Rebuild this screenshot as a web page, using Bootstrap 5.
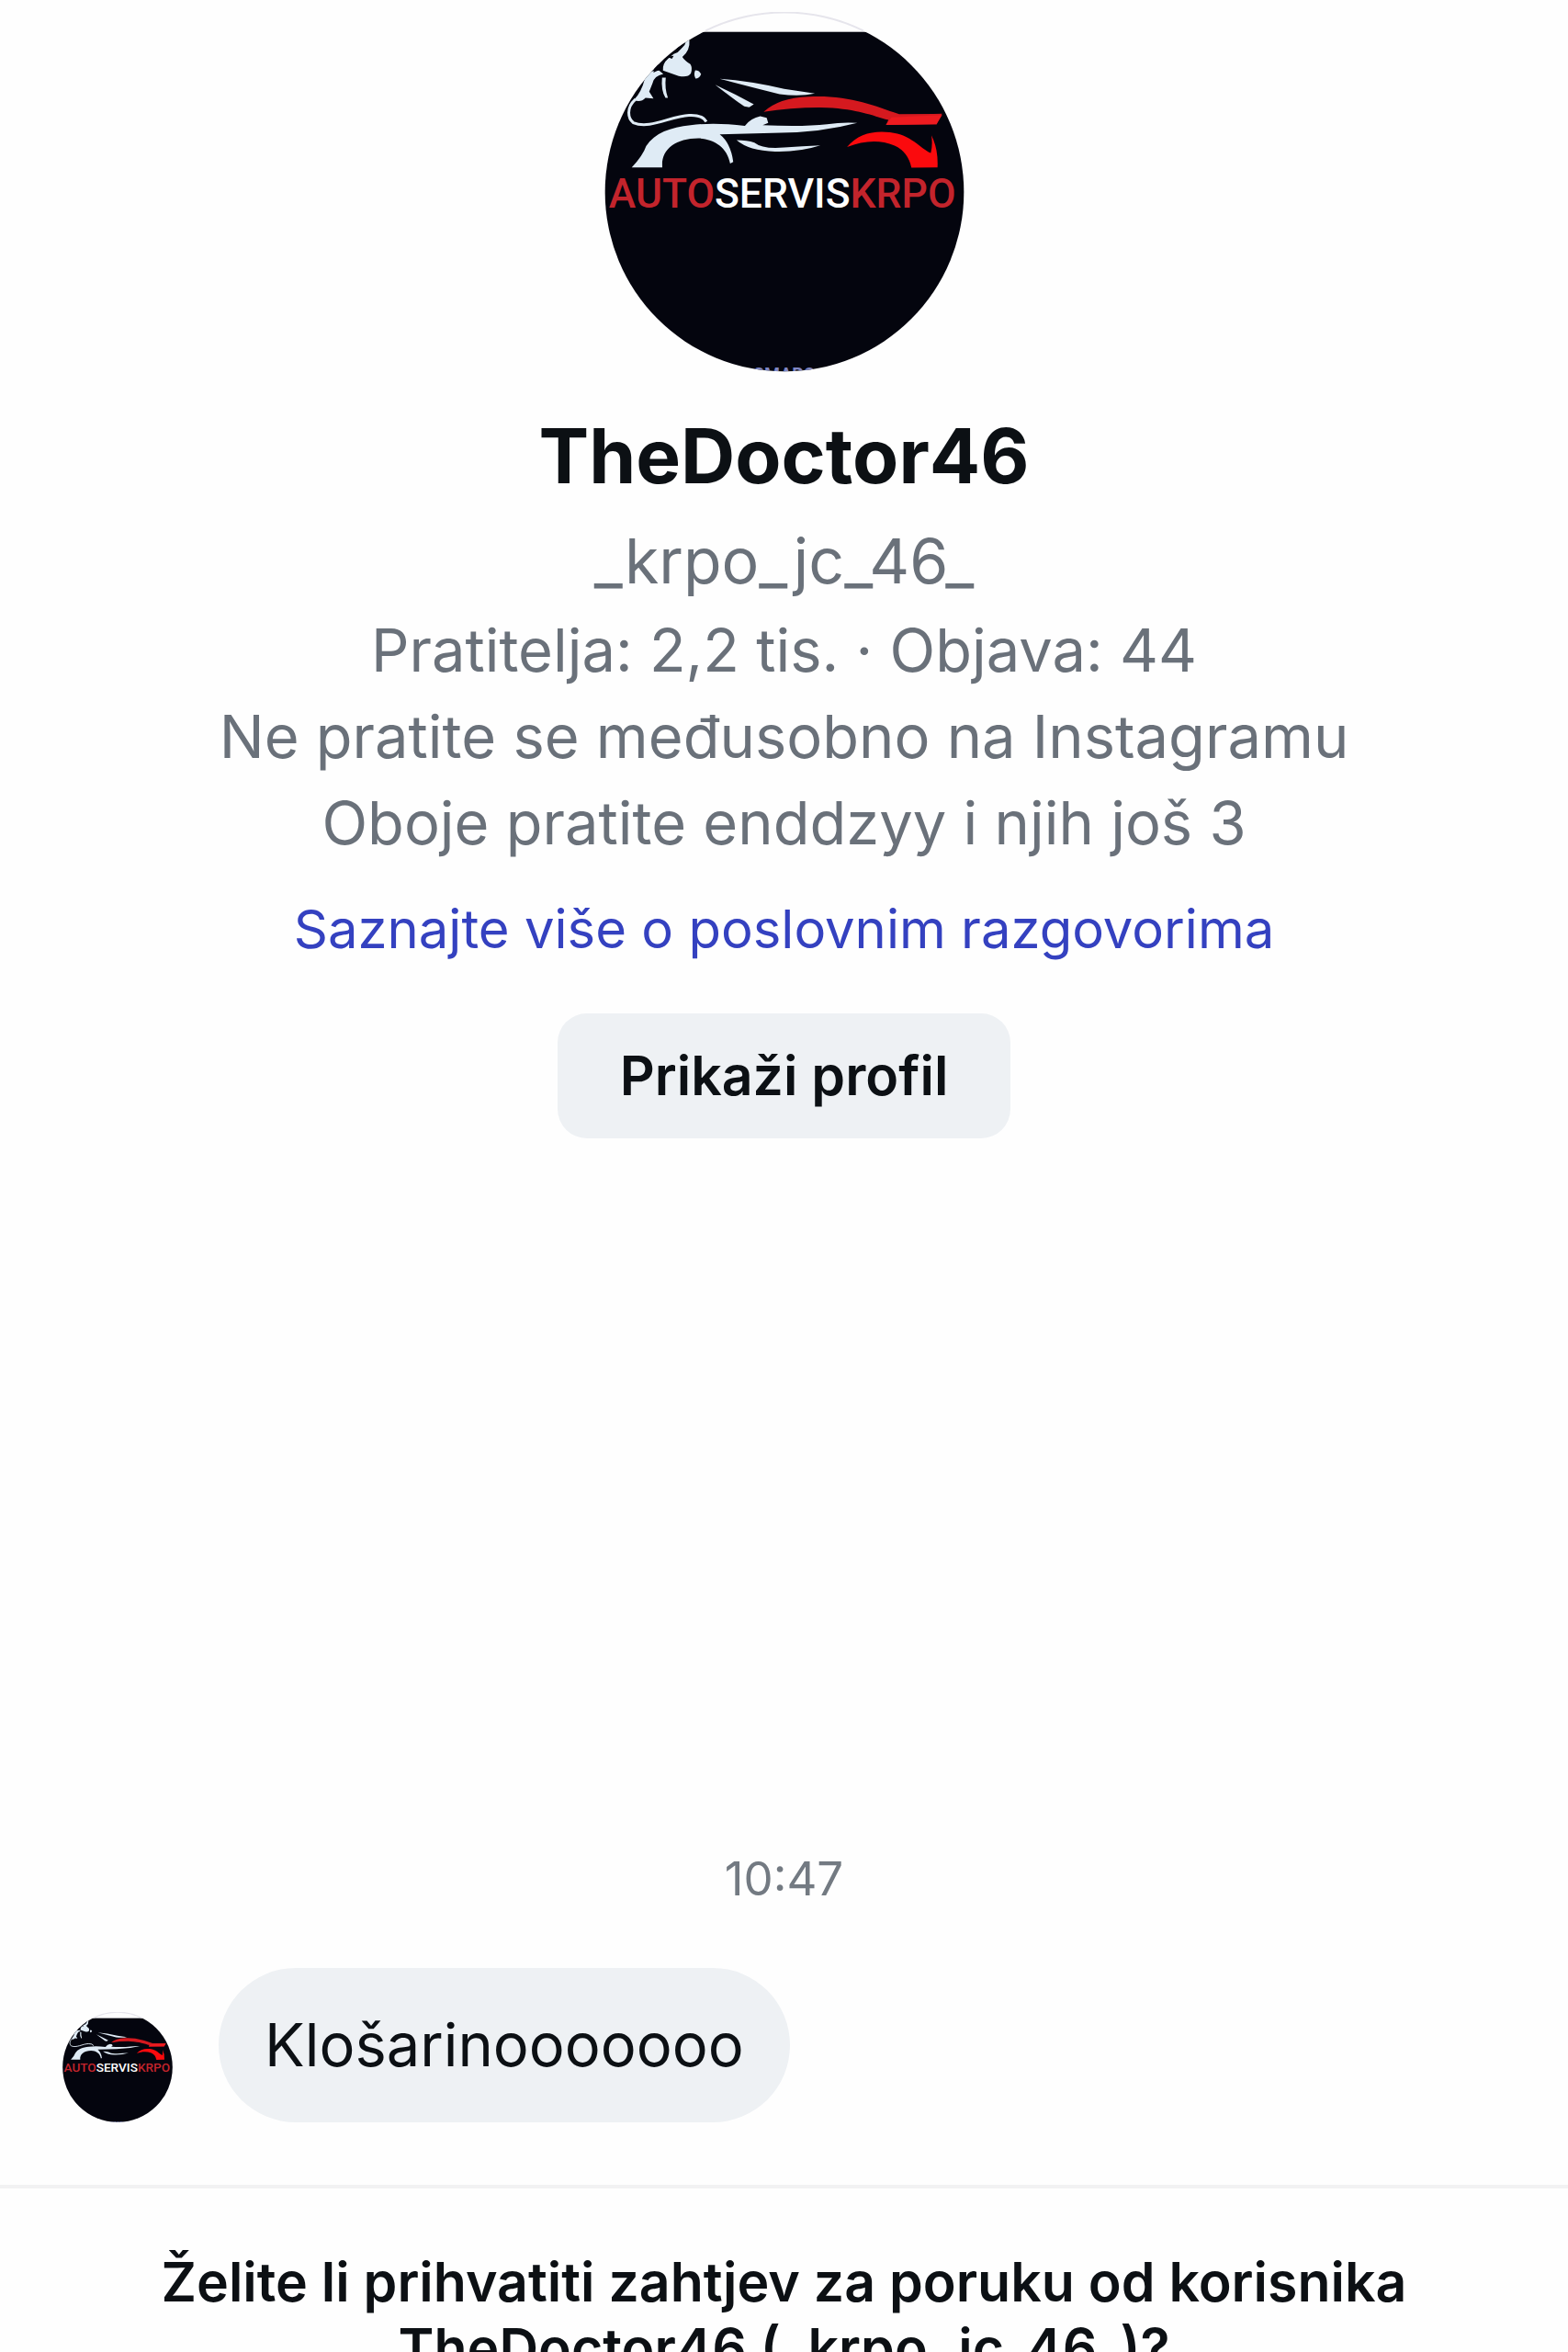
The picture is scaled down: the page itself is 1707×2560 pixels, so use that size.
<!DOCTYPE html>
<html lang="hr">
<head>
<meta charset="utf-8">
<meta name="viewport" content="width=device-width, initial-scale=1">
<title>TheDoctor46</title>
<link href="https://cdn.jsdelivr.net/npm/bootstrap@5.3.0/dist/css/bootstrap.min.css" rel="stylesheet">
<style>
  body { font-family: Inter, "Liberation Sans", sans-serif; color: #0c1014; background: #fefefe; }
  .profile-head { padding-top: 13px; }
  .avatar-large { width: 392px; height: 392px; }
  .avatar-small { width: 120px; height: 120px; }
  .profile-name { font-size: 82px; line-height: 96px; font-weight: 700; margin-top: 44px; }
  .profile-meta { font-size: 65px; line-height: 94px; color: #6a717a; }
  .handle-line { font-size: 68px; margin-top: 18px; margin-bottom: 4px; }
  .learn-link { font-size: 58px; line-height: 72px; color: #3441c0; margin-top: 32px; }
  .profile-btn { font-size: 59px; line-height: 72px; font-weight: 600; padding: 32px 68px; margin-top: 56px; border-radius: 32px; color: #0c1014; background: #eef1f4; border: 0; }
  .time-stamp { font-size: 51px; line-height: 60px; color: #737a82; margin-top: 776px; }
  .message-row { padding: 0 68px; margin-top: 67px; gap: 50px; }
  .bubble { font-size: 65px; line-height: 80px; padding: 44px 50px; border-radius: 84px; background: #eef1f4; }
  .request-bar { border-top: 4px solid #f2f2f3; margin-top: 68px; padding: 66px 120px; font-size: 59px; line-height: 72px; font-weight: 600; }
</style>
<script src="https://cdn.jsdelivr.net/npm/bootstrap@5.3.0/dist/js/bootstrap.bundle.min.js"></script>
</head>
<body>
<div class="chat-page">
  <header class="profile-head d-flex flex-column align-items-center text-center">
    <svg class="avatar-large d-block" viewBox="54 38 1174 1174" role="img" aria-label="Auto servis Krpo">
      <defs>
        <clipPath id="round"><circle cx="641" cy="625" r="585"/></clipPath>
        <g id="logo" clip-path="url(#round)">
          <rect x="54" y="38" width="1174" height="1174" fill="#fefefe"/>
          <rect x="54" y="103" width="1174" height="1109" fill="#04050e"/>
          <g fill="#dfebf5">
            <path d="M318 125L331 130Q334 163 308 185Q316 198 334 208Q342 220 336 238Q327 253 296 247L245 229Q243 206 262 190L280 175Q309 168 318 125z"/>
            <path d="M150 325Q175 299 185 258Q200 225 232 229L246 240Q216 246 211 270L200 298L214 320L188 318Q172 335 150 325z"/>
            <path d="M242 252h12q-4 36 7 66h-8q-15-24-11-66z"/>
            <path d="M350 228q14 0 19 13q-5 14-18 14q-7-13-1-27z"/>
            <path d="M430 256Q530 263 640 289L740 304Q690 315 625 306Q535 284 430 256z"/>
            <path d="M415 275Q480 305 541 339L526 349L510 346Q470 318 415 275z"/>
            <path d="M143 545Q180 505 190 475C218 432 270 414 335 407Q410 397 512 409Q532 384 562 378L583 383L588 400L570 407Q700 413 780 404Q830 397 878 400Q760 431 630 432L430 437Q466 465 474 527L464 532C454 478 410 451 360 450C285 450 237 488 243 545z"/>
            <path d="M485 456Q520 456 543 464Q570 486 640 480Q700 476 758 473Q690 495 610 493Q525 491 485 456z"/>
          </g>
          <path d="M155 323C125 350 130 385 148 399C202 422 270 377 330 375Q374 373 386 396" fill="none" stroke="#dfebf5" stroke-width="9"/>
          <path d="M218 212l22-3-7 18-19 9zM258 184l22-3-6 10zM283 164q32-6 36-27l-14 4z" fill="#04050e"/>
          <path d="M573 364Q620 318 720 314C850 308 930 342 1015 371L1155 370L1137 405L972 406L980 390C925 375 880 355 780 350Q670 348 573 364z" fill="#d5191f"/>
          <path d="M972 406L990 382L1155 374L1137 403z" fill="#ee1b20"/>
          <path d="M845 478C880 435 930 424 985 430C1055 438 1080 480 1118 498Q1125 470 1120 440Q1143 485 1140 545L1055 546Q1044 494 1000 474C950 453 900 458 845 478z" fill="#fb0a0d"/>
          <text x="634" y="677" text-anchor="middle" font-family="Roboto, sans-serif" font-weight="500" font-size="133" fill="#c3242c">AUTO<tspan fill="#fff">SERVIS</tspan>KRPO</text>
          <text x="641" y="1242" text-anchor="middle" font-family="Roboto, sans-serif" font-weight="700" font-size="58" fill="#8087c4">SMARO</text>
        </g>
      </defs>
      <use href="#logo"/>
      <path d="M384 99A585 585 0 0 1 898 99" fill="none" stroke="#e6e5ec" stroke-width="6"/>
    </svg>
    <h1 class="profile-name mb-0">TheDoctor46</h1>
    <div class="profile-meta handle-line">_krpo_jc_46_</div>
    <div class="profile-meta">Pratitelja: 2,2 tis. · Objava: 44</div>
    <div class="profile-meta">Ne pratite se međusobno na Instagramu</div>
    <div class="profile-meta">Oboje pratite enddzyy i njih još 3</div>
    <a class="learn-link text-decoration-none" href="#">Saznajte više o poslovnim razgovorima</a>
    <button type="button" class="btn profile-btn">Prikaži profil</button>
  </header>
  <main>
    <div class="time-stamp text-center">10:47</div>
    <div class="message-row d-flex align-items-end">
      <svg class="avatar-small flex-shrink-0" viewBox="54 38 1174 1174" aria-hidden="true">
        <use href="#logo"/>
        <path d="M384 99A585 585 0 0 1 898 99" fill="none" stroke="#e6e5ec" stroke-width="12"/>
      </svg>
      <div class="bubble">Klošarinooooooo</div>
    </div>
  </main>
  <footer class="request-bar text-center">Želite li prihvatiti zahtjev za poruku od korisnika TheDoctor46 (_krpo_jc_46_)?</footer>
</div>
</body>
</html>
